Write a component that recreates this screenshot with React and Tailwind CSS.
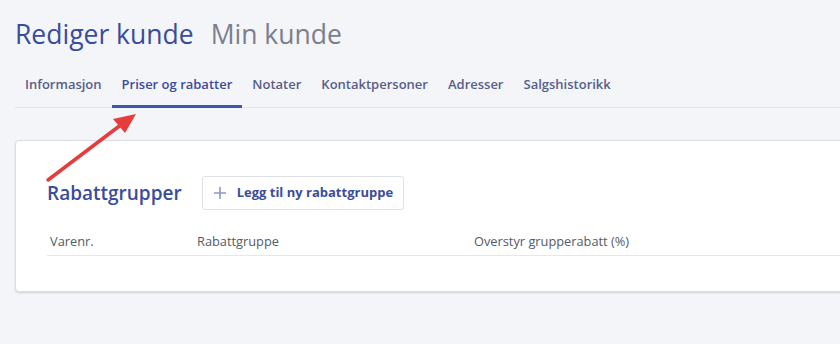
export default function App() {
  const tabs = ["Informasjon", "Priser og rabatter", "Notater", "Kontaktpersoner", "Adresser", "Salgshistorikk"];
  return (
    <div className="relative w-[840px] h-[344px] overflow-hidden bg-[#f4f5f9] font-['Open_Sans',sans-serif]">
      <div className="pl-[15px] pt-[14px]">
        <h1 className="flex items-baseline gap-[17px] text-[26.5px] leading-[40px]">
          <span className="text-[#3a4c9c]">Rediger kunde</span>
          <span className="text-[#7b7f8c]">Min kunde</span>
        </h1>
        <nav className="mt-[14px] flex border-b border-[#e2e4ea]">
          {tabs.map((t) => (
            <div
              key={t}
              className={
                "px-[10px] pt-[6px] pb-[11px] text-[13px] font-semibold leading-[20px] " +
                (t === "Priser og rabatter"
                  ? "text-[#3a4c9c] border-b-[3px] border-[#3f55b5] -mb-px"
                  : "text-[#56608a] border-b-[3px] border-transparent -mb-px")
              }
            >
              {t}
            </div>
          ))}
        </nav>
        <section className="mt-[32px] -mr-[10px] rounded-[4px] border border-[#dcdee4] bg-white shadow-[0_1px_2px_rgba(0,0,0,0.15)] pl-[31px] pt-[35px] pb-[35px]">
          <div className="flex items-center gap-[20px]">
            <h2 className="text-[19px] font-semibold text-[#3a4c9c]">Rabattgrupper</h2>
            <button className="flex h-[34px] items-center gap-[10px] rounded-[3px] border border-[#dfe1e8] bg-white pl-[10px] pr-[10px] text-[13px] font-bold text-[#3a4c9c]">
              <svg width="14" height="14" viewBox="0 0 14 14" className="text-[#8d97c5]">
                <path d="M7 1v12M1 7h12" stroke="currentColor" strokeWidth="1.6" />
              </svg>
              Legg til ny rabattgruppe
            </button>
          </div>
          <div className="mt-[22px] grid grid-cols-[147px_277px_1fr] border-b border-[#e5e7ec] pb-[4px] pl-[3px] text-[12.8px] text-[#555a66]">
            <div>Varenr.</div>
            <div>Rabattgruppe</div>
            <div>Overstyr grupperabatt (%)</div>
          </div>
        </section>
      </div>
      <svg className="absolute left-0 top-0" width="840" height="344">
        <line x1="48" y1="180" x2="122" y2="124" stroke="#e63c3c" strokeWidth="3.5" strokeLinecap="round" />
        <polygon points="136,114 113,119 125,133" fill="#e63c3c" />
      </svg>
    </div>
  );
}
